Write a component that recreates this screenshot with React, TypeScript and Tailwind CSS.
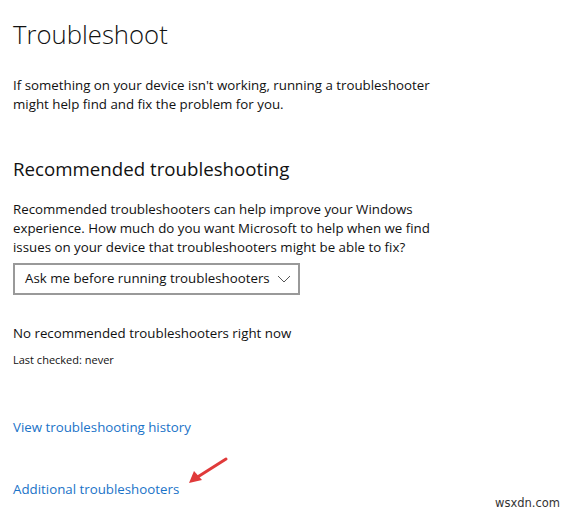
import React from 'react'

const font = { fontFamily: '"Open Sans", "Noto Sans", sans-serif' }

function Chevron() {
  return (
    <svg width="14" height="8" viewBox="0 0 14 8" fill="none" className="shrink-0">
      <path d="M1 1 L7 7 L13 1" stroke="#555" strokeWidth="1" />
    </svg>
  )
}

function Arrow() {
  return (
    <svg width="44" height="30" viewBox="0 0 44 30" className="absolute left-[186px] top-[456px]">
      <path d="M40 3 L10 22" stroke="#e03a3a" strokeWidth="3" strokeLinecap="round" />
      <path d="M3 27 L8 15 L16 24 Z" fill="#e03a3a" />
    </svg>
  )
}

export default function App() {
  return (
    <main className="relative w-[568px] h-[513px] bg-white overflow-hidden text-[#000]" style={font}>
      <div className="pl-[13px] pt-[17px]">
        <h1 className="text-[25.7px] font-light leading-[36px] text-[#111]">Troubleshoot</h1>

        <p className="mt-[23px] w-[440px] text-[13.3px] leading-[19px] text-[#111]">
          If something on your device isn't working, running a troubleshooter might help find and fix the problem for you.
        </p>

        <h2 className="mt-[41px] text-[18.7px] leading-[28px] text-[#111]">Recommended troubleshooting</h2>

        <p className="mt-[17px] w-[440px] text-[13.3px] leading-[19px] text-[#111]">
          Recommended troubleshooters can help improve your Windows experience. How much do you want Microsoft to help when we find issues on your device that troubleshooters might be able to fix?
        </p>

        <div className="mt-[6px] flex h-[32px] w-[287px] items-center justify-between border-2 border-[#999] pl-[10px] pr-[7px] text-[13.3px] whitespace-nowrap text-[#111]">
          <span>Ask me before running troubleshooters</span>
          <Chevron />
        </div>

        <p className="mt-[29px] text-[13.3px] leading-[19px] text-[#111]">No recommended troubleshooters right now</p>
        <p className="mt-[9px] text-[11px] leading-[16px] text-[#111]">Last checked: never</p>

        <a className="mt-[50px] block text-[13.3px] leading-[19px] text-[#1a73c8]">View troubleshooting history</a>
        <a className="mt-[43px] block text-[13.3px] leading-[19px] text-[#1a73c8]">Additional troubleshooters</a>
      </div>

      <Arrow />

      <span className="absolute left-[495px] top-[496px] text-[11.5px] leading-[14px] text-[#333]" style={{ fontFamily: '"DejaVu Sans", sans-serif' }}>
        wsxdn.com
      </span>
    </main>
  )
}
